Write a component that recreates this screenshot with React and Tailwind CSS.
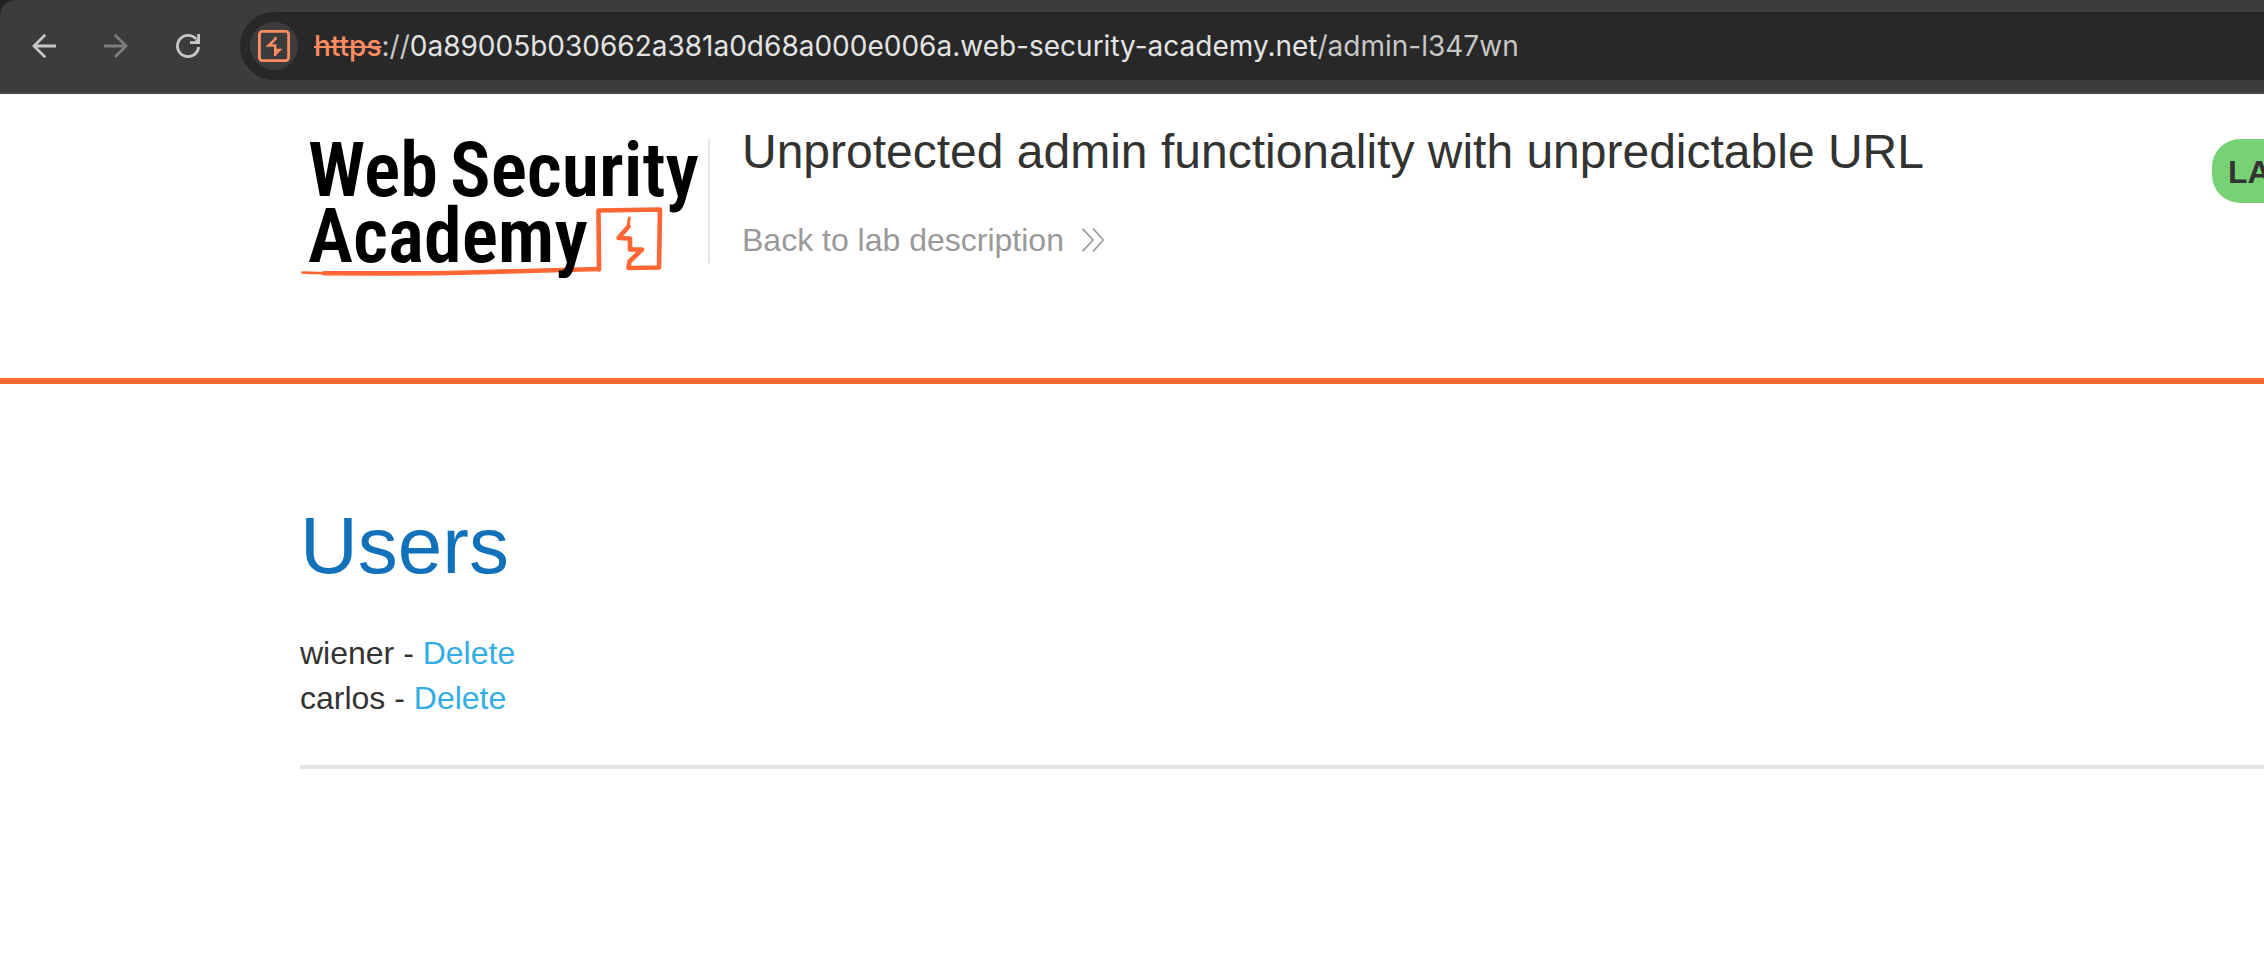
import React from "react";

function BackIcon() {
  return (
    <svg className="size-6" viewBox="0 0 24 24" fill="none" stroke="currentColor" strokeWidth="2.8">
      <path d="M24 12H2M13.200.8 1.900 12l11.300 11.200" />
    </svg>
  );
}

function ForwardIcon() {
  return (
    <svg className="size-6" viewBox="0 0 24 24" fill="none" stroke="currentColor" strokeWidth="2.8">
      <path d="M0 12h22M10.800.8 22.100 12l-11.300 11.200" />
    </svg>
  );
}

function ReloadIcon() {
  return (
    <svg className="size-6" viewBox="0 0 24 24" fill="none" stroke="currentColor" strokeWidth="2.8">
      <path d="M22.600 13A10.600 10.600 0 1 1 20.200 5.200" />
      <path d="M22.600 0v8.600H14" />
      <path d="M17.500 8.600 22.600 3.500v5.100z" fill="currentColor" stroke="none" />
    </svg>
  );
}

function SiteIcon() {
  return (
    <svg className="size-8 text-[#ff8c62]" viewBox="0 0 32 32" fill="none" stroke="currentColor">
      <rect x="1.4" y="1.4" width="29.2" height="29.2" rx="3" strokeWidth="2.8" />
      <path d="M17.500 7V9L10.500 15.500H17.200V26M17.200 20H21.500L17.200 24.500" strokeWidth="2.4" />
    </svg>
  );
}

function Logo() {
  return (
    <svg className="h-[144px] w-[400px]" viewBox="0 0 400 144" role="img" aria-label="Web Security Academy">
      <g fill="none" stroke="#ff6633" strokeLinecap="round" strokeLinejoin="round">
        <path d="M299 135.500 298.500 76.500 360 75.500 359 133.500 328.500 134 329.500 127.500 342 115.500H330V104.500L318.500 104 328.500 92.500" strokeWidth="4.600" />
        <path d="M328 92.500 329.300 84" strokeWidth="3" />
        <path d="M299 135C250 136.500 200 137.500 150 139 110 139.500 70 139.500 24 139.300" strokeWidth="4.600" />
        <path d="M2.500 138.500C10 138.800 16 139 24 139.300" strokeWidth="2.600" />
      </g>
      <g fontFamily="'Roboto Condensed', Roboto, sans-serif" fontWeight="600" fontSize="76" fill="#000">
        <text x="8" y="62">Web</text>
        <text x="150" y="62">Security</text>
        <text x="8" y="128">Academy</text>
      </g>
    </svg>
  );
}

function BrowserBar() {
  return (
    <header className="bg-[#202322]">
      <div className="flex items-center rounded-tl-2xl border-b-2 border-[#474747] bg-[#3c3c3c] py-3 pl-8">
        <nav className="flex shrink-0 gap-12" aria-label="Browser controls">
          <button type="button" aria-label="Back" className="text-[#c7c7c7]">
            <BackIcon />
          </button>
          <button type="button" aria-label="Forward" className="text-[#7c7c7c]">
            <ForwardIcon />
          </button>
          <button type="button" aria-label="Reload" className="text-[#c7c7c7]">
            <ReloadIcon />
          </button>
        </nav>
        <div className="ml-10 flex h-[68px] grow items-center rounded-l-full bg-[#282828] pl-[10px] font-['Inter',sans-serif] text-[28px] leading-8 whitespace-nowrap text-[#c7c7c7]">
          <button type="button" aria-label="Site information" className="mr-4 flex size-12 items-center justify-center rounded-full bg-[#3c3c3c]">
            <SiteIcon />
          </button>
          <span className="font-medium text-[#ff8c62] line-through">https</span>
          <span>://</span>
          <span className="text-[#e3e3e3]">0a89005b030662a381a0d68a000e006a.web-security-academy.net</span>
          <span>/admin-l347wn</span>
        </div>
      </div>
    </header>
  );
}

function LabHeader() {
  return (
    <section className="flex h-[290px] items-start overflow-hidden border-b-[6px] border-[#ff6633] pl-[300px]">
      <a href="#academy" className="mt-10 shrink-0">
        <Logo />
      </a>
      <div className="mt-[45px] ml-2 h-[124px] w-[2px] shrink-0 bg-[#e5e5e5]" />
      <div className="mt-[30px] ml-8 grow whitespace-nowrap">
        <h2 className="text-5xl leading-14 text-[#333332]">Unprotected admin functionality with unpredictable URL</h2>
        <a href="#lab" className="mt-10 flex items-center gap-[18px] text-[32px] leading-10 text-[#999999]">
          Back to lab description
          <svg className="h-6 w-[22px]" viewBox="0 0 22 24" fill="none" stroke="currentColor" strokeWidth="1.6">
            <path d="M.6.6 11 12 .6 23.400M11 .6 21.400 12 11 23.400" />
          </svg>
        </a>
      </div>
      <div className="mt-[45px] flex h-16 w-[52px] shrink-0 items-center overflow-hidden rounded-l-[28px] bg-[#76d275] pt-[2px] pl-4 text-[32px] font-bold text-[#333332]">
        LAB
      </div>
    </section>
  );
}

const users = ["wiener", "carlos"];

export default function App() {
  return (
    <div className="min-h-screen overflow-hidden bg-white font-['Liberation_Sans',Arial,sans-serif] text-[#333332]">
      <BrowserBar />
      <LabHeader />
      <main className="pt-28 pl-[300px]">
        <h1 className="text-[80px] leading-[100px] text-[#1171ba]">Users</h1>
        <ul className="mt-[35px] text-[32px] leading-[45px]">
          {users.map((name) => (
            <li key={name}>
              {name} - <a href={"#delete-" + name} className="text-[#33ade6]">Delete</a>
            </li>
          ))}
        </ul>
        <hr className="mt-11 border-t-4 border-[#e5e5e5]" />
      </main>
    </div>
  );
}
